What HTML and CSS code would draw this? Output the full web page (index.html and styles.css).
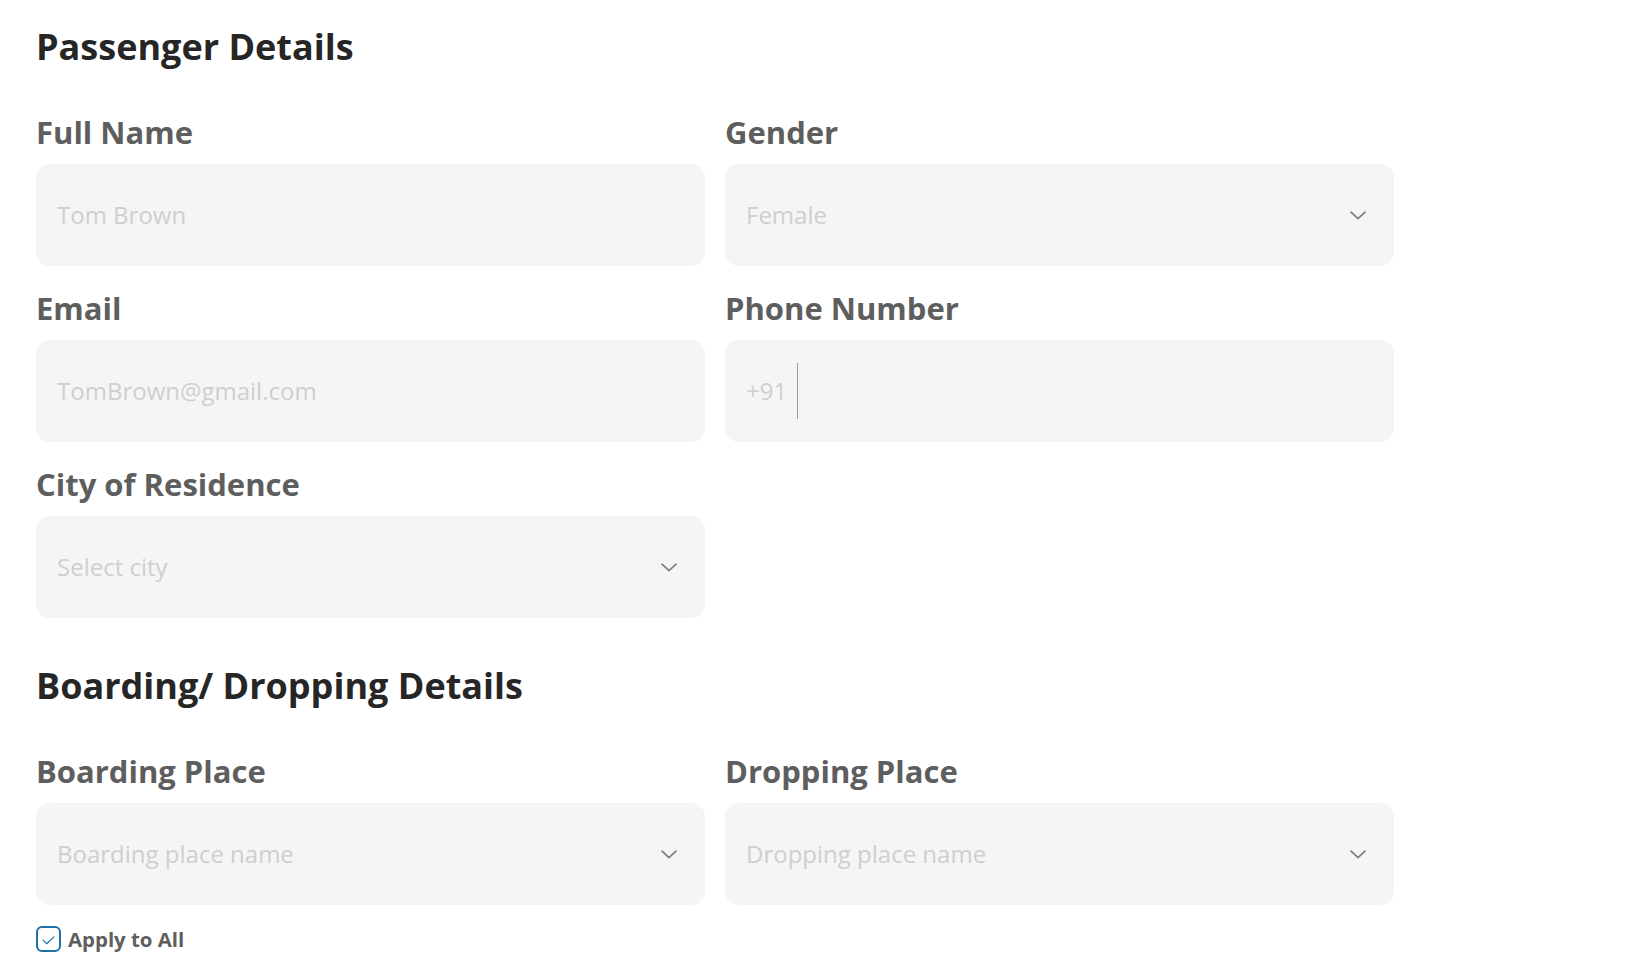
FILE: index.html
```html
<!DOCTYPE html>
<html lang="en">
<head>
<meta charset="utf-8">
<title>Passenger Details</title>
<link rel="stylesheet" href="styles.css">
</head>
<body>
<main class="page">
  <section class="section">
    <h2 class="section-title">Passenger Details</h2>
    <div class="form-grid">
      <div class="field">
        <label class="field-label">Full Name</label>
        <div class="field-box"><span class="placeholder">Tom Brown</span></div>
      </div>
      <div class="field">
        <label class="field-label">Gender</label>
        <div class="field-box select"><span class="placeholder">Female</span>
          <svg class="chevron" viewBox="0 0 16 9" width="16" height="9"><path d="M1 1.2 L8 7.6 L15 1.2" fill="none" stroke="#7a7a7a" stroke-width="1.6" stroke-linecap="round" stroke-linejoin="round"/></svg>
        </div>
      </div>
      <div class="field">
        <label class="field-label">Email</label>
        <div class="field-box"><span class="placeholder">TomBrown@gmail.com</span></div>
      </div>
      <div class="field">
        <label class="field-label">Phone Number</label>
        <div class="field-box phone"><span class="placeholder">+91</span><span class="divider"></span></div>
      </div>
      <div class="field">
        <label class="field-label">City of Residence</label>
        <div class="field-box select"><span class="placeholder">Select city</span>
          <svg class="chevron" viewBox="0 0 16 9" width="16" height="9"><path d="M1 1.2 L8 7.6 L15 1.2" fill="none" stroke="#7a7a7a" stroke-width="1.6" stroke-linecap="round" stroke-linejoin="round"/></svg>
        </div>
      </div>
    </div>
  </section>

  <section class="section section-boarding">
    <h2 class="section-title">Boarding/ Dropping Details</h2>
    <div class="form-grid">
      <div class="field">
        <label class="field-label">Boarding Place</label>
        <div class="field-box select"><span class="placeholder">Boarding place name</span>
          <svg class="chevron" viewBox="0 0 16 9" width="16" height="9"><path d="M1 1.2 L8 7.6 L15 1.2" fill="none" stroke="#7a7a7a" stroke-width="1.6" stroke-linecap="round" stroke-linejoin="round"/></svg>
        </div>
      </div>
      <div class="field">
        <label class="field-label">Dropping Place</label>
        <div class="field-box select"><span class="placeholder">Dropping place name</span>
          <svg class="chevron" viewBox="0 0 16 9" width="16" height="9"><path d="M1 1.2 L8 7.6 L15 1.2" fill="none" stroke="#7a7a7a" stroke-width="1.6" stroke-linecap="round" stroke-linejoin="round"/></svg>
        </div>
      </div>
    </div>
    <div class="apply-all">
      <span class="checkbox">
        <svg viewBox="0 0 14 10" width="13" height="9"><path d="M1 4.6 L5 8.6 L13 1" fill="none" stroke="#1f6fa8" stroke-width="1.3" stroke-linecap="round" stroke-linejoin="round"/></svg>
      </span>
      <span class="apply-text">Apply to All</span>
    </div>
  </section>
</main>
</body>
</html>
```

FILE: styles.css
```css
* {
  box-sizing: border-box;
}

html, body {
  margin: 0;
  padding: 0;
  background: #ffffff;
}

body {
  font-family: "Open Sans", "Noto Sans", sans-serif;
}

.page {
  width: 1430px;
  padding: 24px 36px 0 36px;
}

.section-title {
  margin: 0 0 43px 0;
  font-size: 36px;
  line-height: 45px;
  font-weight: 700;
  color: #262626;
}

.section-boarding {
  margin-top: 45px;
}

.form-grid {
  display: grid;
  grid-template-columns: 669px 669px;
  column-gap: 20px;
  row-gap: 22px;
  width: 1358px;
}

.field {
  display: flex;
  flex-direction: column;
  gap: 12px;
}

.field-label {
  font-size: 31px;
  line-height: 40px;
  font-weight: 700;
  color: #5e5e5e;
}

.field-box {
  height: 102px;
  border-radius: 14px;
  background: #f5f5f5;
  display: flex;
  align-items: center;
  padding: 0 28px 0 21px;
}

.placeholder {
  font-size: 24px;
  line-height: 32px;
  color: #cfcfcf;
  font-weight: 400;
}

.select {
  justify-content: space-between;
}

.chevron {
  display: block;
  flex: none;
}

.phone .divider {
  width: 1px;
  height: 56px;
  background: #9c9c9c;
  margin-left: 10px;
}

.apply-all {
  display: flex;
  align-items: center;
  gap: 7px;
  margin-top: 21px;
}

.checkbox {
  width: 25px;
  height: 26px;
  border: 2px solid #1f6fa8;
  border-radius: 6px;
  display: flex;
  align-items: center;
  justify-content: center;
}

.checkbox svg {
  display: block;
  margin-top: 2px;
}

.apply-text {
  font-size: 20.4px;
  line-height: 26px;
  font-weight: 700;
  color: #5e5e5e;
}
```
